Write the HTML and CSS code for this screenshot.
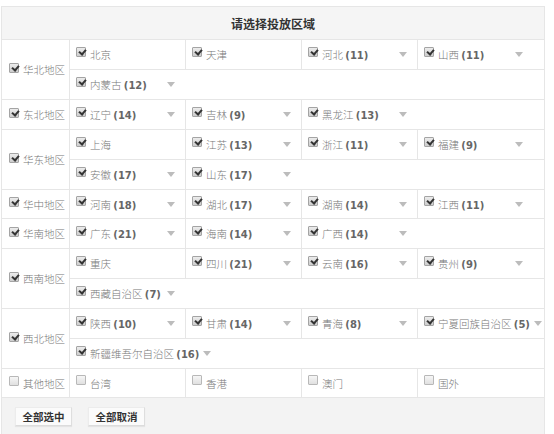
FILE: index.html
```html
<!DOCTYPE html>
<html lang="zh">
<head>
<meta charset="utf-8">
<title>请选择投放区域</title>
<link rel="stylesheet" href="styles.css">
</head>
<body>
<div class="box">
  <div class="head">请选择投放区域</div>

  <div class="region">
    <div class="rname"><span class="cb on"></span>华北地区</div>
    <div class="rows">
      <div class="row">
        <div class="item"><span class="cb on"></span><span class="lb">北京</span></div>
        <div class="item"><span class="cb on"></span><span class="lb">天津</span></div>
        <div class="item"><span class="cb on"></span><span class="lb">河北 <b>(11)</b></span><i class="arr"></i></div>
        <div class="item"><span class="cb on"></span><span class="lb">山西 <b>(11)</b></span><i class="arr"></i></div>
      </div>
      <div class="row">
        <div class="item"><span class="cb on"></span><span class="lb">内蒙古 <b>(12)</b></span><i class="arr"></i></div>
      </div>
    </div>
  </div>

  <div class="region">
    <div class="rname"><span class="cb on"></span>东北地区</div>
    <div class="rows">
      <div class="row">
        <div class="item"><span class="cb on"></span><span class="lb">辽宁 <b>(14)</b></span><i class="arr"></i></div>
        <div class="item"><span class="cb on"></span><span class="lb">吉林 <b>(9)</b></span><i class="arr"></i></div>
        <div class="item"><span class="cb on"></span><span class="lb">黑龙江 <b>(13)</b></span><i class="arr"></i></div>
      </div>
    </div>
  </div>

  <div class="region">
    <div class="rname"><span class="cb on"></span>华东地区</div>
    <div class="rows">
      <div class="row">
        <div class="item"><span class="cb on"></span><span class="lb">上海</span></div>
        <div class="item"><span class="cb on"></span><span class="lb">江苏 <b>(13)</b></span><i class="arr"></i></div>
        <div class="item"><span class="cb on"></span><span class="lb">浙江 <b>(11)</b></span><i class="arr"></i></div>
        <div class="item"><span class="cb on"></span><span class="lb">福建 <b>(9)</b></span><i class="arr"></i></div>
      </div>
      <div class="row">
        <div class="item"><span class="cb on"></span><span class="lb">安徽 <b>(17)</b></span><i class="arr"></i></div>
        <div class="item"><span class="cb on"></span><span class="lb">山东 <b>(17)</b></span><i class="arr"></i></div>
      </div>
    </div>
  </div>

  <div class="region">
    <div class="rname"><span class="cb on"></span>华中地区</div>
    <div class="rows">
      <div class="row short">
        <div class="item"><span class="cb on"></span><span class="lb">河南 <b>(18)</b></span><i class="arr"></i></div>
        <div class="item"><span class="cb on"></span><span class="lb">湖北 <b>(17)</b></span><i class="arr"></i></div>
        <div class="item"><span class="cb on"></span><span class="lb">湖南 <b>(14)</b></span><i class="arr"></i></div>
        <div class="item"><span class="cb on"></span><span class="lb">江西 <b>(11)</b></span><i class="arr"></i></div>
      </div>
    </div>
  </div>

  <div class="region">
    <div class="rname"><span class="cb on"></span>华南地区</div>
    <div class="rows">
      <div class="row">
        <div class="item"><span class="cb on"></span><span class="lb">广东 <b>(21)</b></span><i class="arr"></i></div>
        <div class="item"><span class="cb on"></span><span class="lb">海南 <b>(14)</b></span><i class="arr"></i></div>
        <div class="item"><span class="cb on"></span><span class="lb">广西 <b>(14)</b></span><i class="arr"></i></div>
      </div>
    </div>
  </div>

  <div class="region">
    <div class="rname"><span class="cb on"></span>西南地区</div>
    <div class="rows">
      <div class="row">
        <div class="item"><span class="cb on"></span><span class="lb">重庆</span></div>
        <div class="item"><span class="cb on"></span><span class="lb">四川 <b>(21)</b></span><i class="arr"></i></div>
        <div class="item"><span class="cb on"></span><span class="lb">云南 <b>(16)</b></span><i class="arr"></i></div>
        <div class="item"><span class="cb on"></span><span class="lb">贵州 <b>(9)</b></span><i class="arr"></i></div>
      </div>
      <div class="row">
        <div class="item"><span class="cb on"></span><span class="lb">西藏自治区 <b>(7)</b></span><i class="arr"></i></div>
      </div>
    </div>
  </div>

  <div class="region">
    <div class="rname"><span class="cb on"></span>西北地区</div>
    <div class="rows">
      <div class="row">
        <div class="item"><span class="cb on"></span><span class="lb">陕西 <b>(10)</b></span><i class="arr"></i></div>
        <div class="item"><span class="cb on"></span><span class="lb">甘肃 <b>(14)</b></span><i class="arr"></i></div>
        <div class="item"><span class="cb on"></span><span class="lb">青海 <b>(8)</b></span><i class="arr"></i></div>
        <div class="item wide"><span class="cb on"></span><span class="lb">宁夏回族自治区 <b>(5)</b></span><i class="arr"></i></div>
      </div>
      <div class="row">
        <div class="item wide"><span class="cb on"></span><span class="lb">新疆维吾尔自治区 <b>(16)</b></span><i class="arr"></i></div>
      </div>
    </div>
  </div>

  <div class="region">
    <div class="rname"><span class="cb"></span>其他地区</div>
    <div class="rows">
      <div class="row short">
        <div class="item"><span class="cb"></span><span class="lb">台湾</span></div>
        <div class="item"><span class="cb"></span><span class="lb">香港</span></div>
        <div class="item"><span class="cb"></span><span class="lb">澳门</span></div>
        <div class="item"><span class="cb"></span><span class="lb">国外</span></div>
      </div>
    </div>
  </div>

  <div class="foot">
    <button class="btn" type="button">全部选中</button>
    <button class="btn" type="button">全部取消</button>
  </div>
</div>
</body>
</html>
```

FILE: styles.css
```css
html, body {
  margin: 0;
  padding: 0;
  background: #fff;
}

body {
  font-family: "Noto Sans CJK SC", "DejaVu Sans", sans-serif;
  font-size: 10.5px;
  font-weight: 300;
  color: #777;
}

.box {
  margin: 6px 0 0 1px;
  width: 544px;
  box-sizing: border-box;
  border: 1px solid #e6e6e6;
  border-bottom: 0;
  height: 428px;
  display: flex;
  flex-direction: column;
}

.head {
  height: 32px;
  flex: none;
  background: #f5f5f5;
  border-bottom: 1px solid #e6e6e6;
  display: flex;
  align-items: center;
  justify-content: center;
  font-size: 12px;
  font-weight: bold;
  color: #333;
}

.region {
  display: flex;
  flex: none;
  border-bottom: 1px solid #e6e6e6;
}

.rname {
  flex: none;
  border-right: 1px solid #e6e6e6;
  display: flex;
  align-items: center;
  padding-left: 7px;
  box-sizing: border-box;
  width: 68px;
}

.rows {
  flex: 1;
  display: flex;
  flex-direction: column;
}

.row {
  height: 29px;
  display: flex;
  align-items: center;
}

.row.short {
  height: 28px;
}

.row + .row {
  border-top: 1px solid #e6e6e6;
}

.item {
  width: 116px;
  height: 100%;
  box-sizing: border-box;
  border-left: 1px solid #e6e6e6;
  padding-left: 6px;
  display: flex;
  align-items: center;
  flex: none;
  white-space: nowrap;
}

.item:first-child {
  border-left: 0;
  width: 115px;
}

.item.wide {
  width: auto;
  flex: 1;
}

.lb {
  min-width: 77px;
  padding-right: 4px;
  box-sizing: border-box;
}

.lb b {
  font-family: "DejaVu Sans", "Noto Sans CJK SC", sans-serif;
  font-size: 10px;
  color: #666;
  font-weight: bold;
}

.cb {
  position: relative;
  width: 10px;
  height: 10px;
  box-sizing: border-box;
  border: 1px solid #b8b8b8;
  border-radius: 1px;
  background: linear-gradient(#f6f6f6, #e0e0e0);
  margin-right: 4px;
  flex: none;
  top: -3px;
}

.rname .cb {
  top: -2px;
}

.cb.on {
  border-color: #a4a4a4;
  background: linear-gradient(#ececec, #cdcdcd);
}

.cb.on::after {
  content: "";
  position: absolute;
  left: 2.5px;
  top: 0px;
  width: 3px;
  height: 5px;
  border-right: 2px solid #333;
  border-bottom: 2px solid #333;
  transform: rotate(40deg);
}

.arr {
  width: 0;
  height: 0;
  border-left: 4.5px solid transparent;
  border-right: 4.5px solid transparent;
  border-top: 5px solid #bcbcbc;
  flex: none;
}

.foot {
  flex: 1;
  background: #f3f3f3;
  display: flex;
  align-items: flex-start;
  gap: 16px;
  padding: 9px 0 0 13px;
}

.btn {
  width: 57px;
  height: 19px;
  padding: 0;
  margin: 0;
  border: 1px solid #ececec;
  border-bottom-color: #dcdcdc;
  border-right-color: #dedede;
  background: #fbfbfb;
  font-family: "Noto Sans CJK SC", sans-serif;
  font-size: 10.5px;
  font-weight: bold;
  color: #333;
  box-shadow: 0 1px 1px rgba(0, 0, 0, 0.06);
}
```
